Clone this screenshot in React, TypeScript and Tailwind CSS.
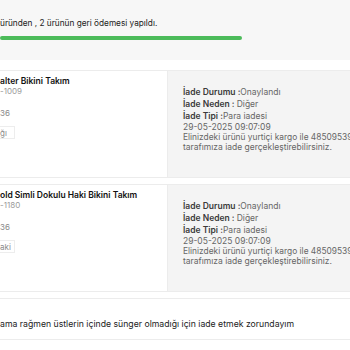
import React from 'react'

type Item = {
  name: string
  code: string
  size: string
  color: string
}

const ITEMS: Item[] = [
  { name: 'alter Bikini Takım', code: '-1009', size: '36', color: 'ğı' },
  { name: 'old Simli Dokulu Haki Bikini Takım', code: '-1180', size: '36', color: 'aki' },
]

function ReturnCard({ item }: { item: Item }) {
  return (
    <div className="flex h-[108px] border-y border-[#ececec]">
      {/* product */}
      <div className="w-[168px] shrink-0 bg-white border-r border-[#ececec] pt-[5px]">
        <p className="text-[8.5px] leading-[10px] font-semibold text-[#111] whitespace-nowrap">{item.name}</p>
        <p className="text-[8px] leading-[10px] text-[#9a9a9a]">{item.code}</p>
        <p className="mt-[12px] text-[8px] leading-[10px] text-[#8a8a8a]">{item.size}</p>
        <div className="mt-[8px] w-[15px] h-[13px] border-y border-r border-[#ededed] flex items-center">
          <span className="text-[8px] leading-[10px] text-[#8a8a8a]">{item.color}</span>
        </div>
      </div>

      {/* return info */}
      <div className="flex-1 bg-[#f4f4f4] pl-[15px] pt-[14.5px] text-[8.5px] text-[#666] whitespace-nowrap">
        <p className="leading-[12px]"><span className="font-semibold text-[#3a3a3a]">İade Durumu :</span>Onaylandı</p>
        <p className="leading-[12px]"><span className="font-semibold text-[#3a3a3a]">İade Neden : </span>Diğer</p>
        <p className="leading-[12px]"><span className="font-semibold text-[#3a3a3a]">İade Tipi :</span>Para iadesi</p>
        <p className="leading-[10px]">29-05-2025 09:07:09</p>
        <p className="leading-[10px] text-[8.4px]">Elinizdeki ürünü yurtiçi kargo ile 48509539</p>
        <p className="leading-[10px]">tarafımıza iade gerçekleştirebilirsiniz.</p>
      </div>
    </div>
  )
}

export default function App() {
  return (
    <div className="w-[350px] h-[350px] overflow-hidden bg-white font-['Inter',sans-serif]">
      <div className="h-[60px] bg-[#f7f7f7] pt-[17.5px]">
        <p className="text-[8.25px] leading-[10px] text-[#222] whitespace-nowrap">üründen , 2 ürünün geri ödemesi yapıldı.</p>
        <div className="mt-[8px] h-[4px] w-[242px] rounded-full bg-[#4cbb5a]" />
      </div>

      <div className="mt-[10px] flex flex-col gap-[6px]">
        {ITEMS.map(item => (
          <ReturnCard key={item.code} item={item} />
        ))}

        <div className="h-[42px] border-y border-[#ececec] pt-[20px]">
          <p className="text-[8.7px] leading-[10px] text-[#222] whitespace-nowrap">
            ama rağmen üstlerin içinde sünger olmadığı için iade etmek zorundayım
          </p>
        </div>
      </div>
    </div>
  )
}
